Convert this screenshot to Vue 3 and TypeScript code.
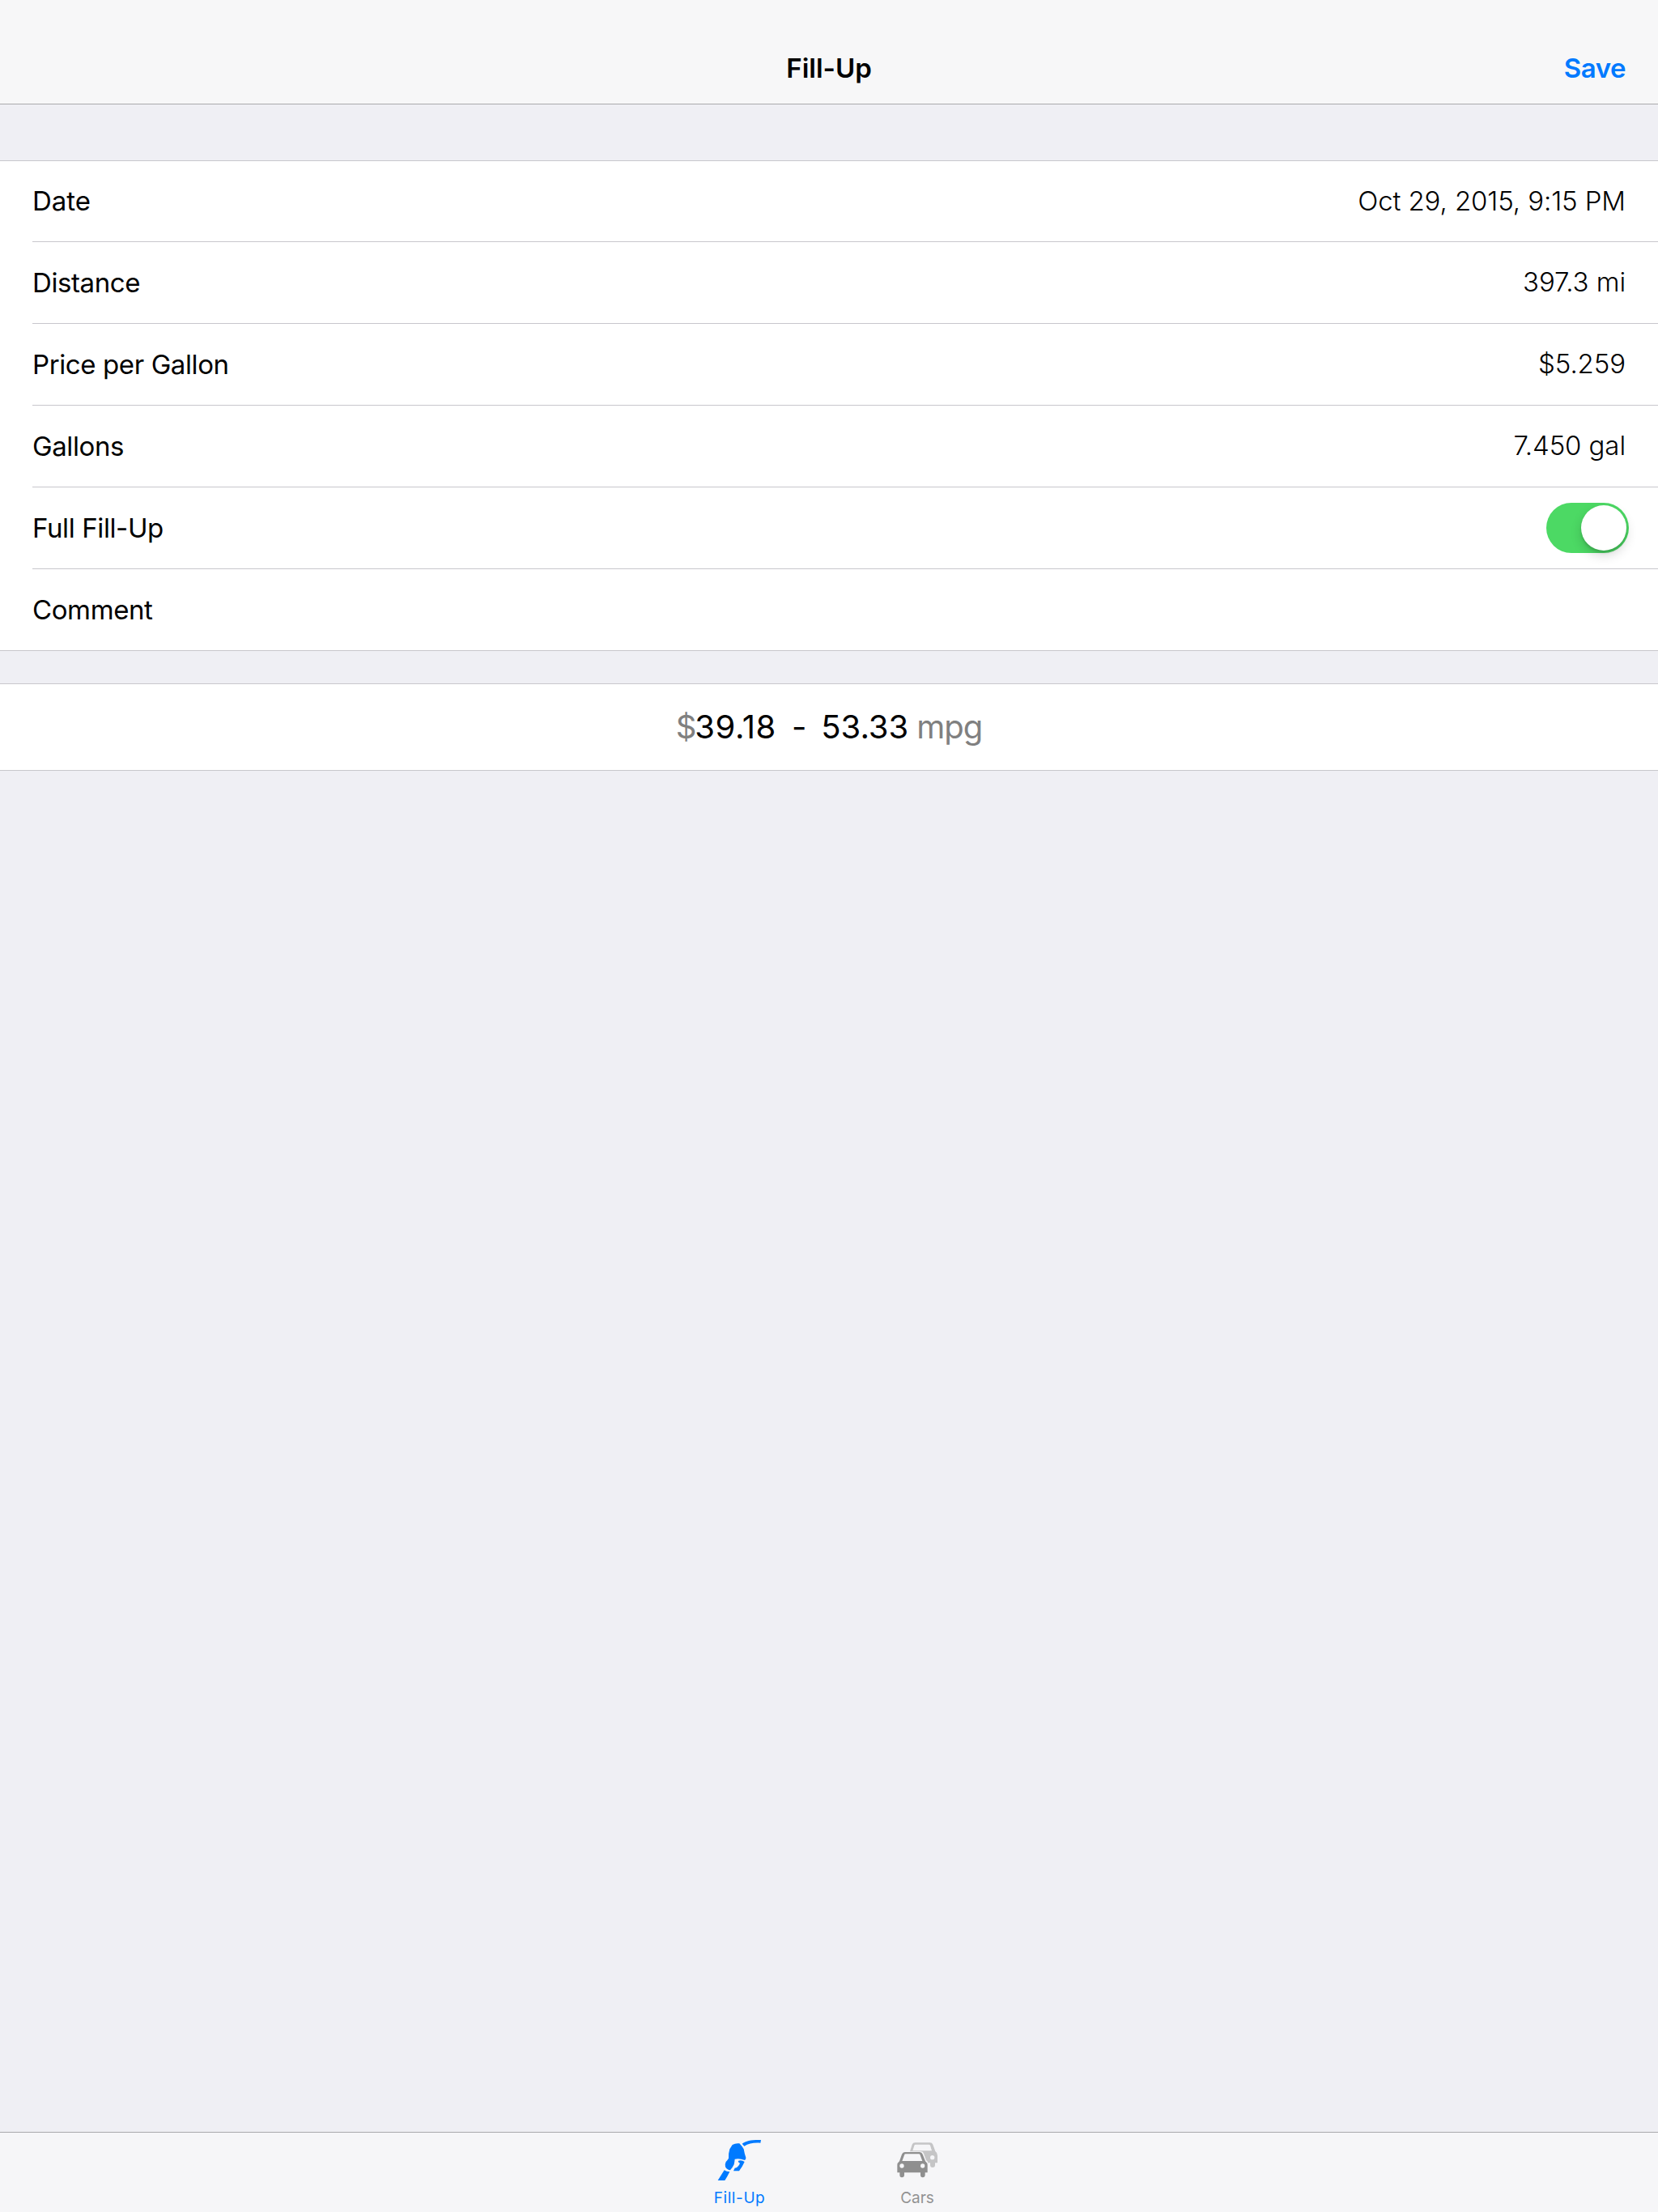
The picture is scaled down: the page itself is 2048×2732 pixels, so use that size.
<script setup lang="ts">
import { ref } from 'vue'

interface Field {
  label: string
  value?: string
  toggle?: boolean
}

const fields: Field[] = [
  { label: 'Date', value: 'Oct 29, 2015, 9:15 PM' },
  { label: 'Distance', value: '397.3 mi' },
  { label: 'Price per Gallon', value: '$5.259' },
  { label: 'Gallons', value: '7.450 gal' },
  { label: 'Full Fill-Up', toggle: true },
  { label: 'Comment' },
]

const fullFillUp = ref(true)
const activeTab = ref<'fillup' | 'cars'>('fillup')
</script>

<template>
  <div class="screen">
    <header class="nav">
      <span class="nav-side"></span>
      <h1 class="nav-title">Fill-Up</h1>
      <button class="nav-side save">Save</button>
    </header>

    <main class="content">
      <section class="group">
        <div v-for="f in fields" :key="f.label" class="row">
          <span class="label">{{ f.label }}</span>
          <span v-if="f.value" class="value">{{ f.value }}</span>
          <button
            v-if="f.toggle"
            class="switch"
            :class="{ on: fullFillUp }"
            role="switch"
            :aria-checked="fullFillUp"
            @click="fullFillUp = !fullFillUp"
          >
            <span class="knob"></span>
          </button>
        </div>
      </section>

      <section class="summary">
        <span class="muted">$</span><span class="cost">39.18</span><span class="dash">-</span><span class="mileage">53.33</span><span class="muted unit">mpg</span>
      </section>
    </main>

    <nav class="tabs">
      <button class="tab" :class="{ active: activeTab === 'fillup' }" @click="activeTab = 'fillup'">
        <svg class="icon" viewBox="72 60 180 180" fill="currentColor">
          <path d="M170 83 C186 72 206 68 240 69 L238 80 C214 78 194 82 178 92 Z" />
          <path d="M134 87 Q146 80 160 82 Q169 91 176 103 Q179 121 184 134 Q185 140 180 144 Q160 136 143 140 Q142 150 140 160 Q135 171 126 181 Q114 180 108 169 Q106 157 110 150 Q116 144 120 137 Q119 119 124 103 Z" />
          <path d="M155 147 Q168 142 179 150 Q171 168 159 184 L138 184 L143 173 Q150 173 153 169 Q160 162 162 155 Q156 153 155 147 Z" />
          <path d="M104 181 Q112 187 124 187 Q116 204 106 219 L80 219 Z" />
        </svg>
        <span class="tab-label wide">Fill-Up</span>
      </button>
      <button class="tab" :class="{ active: activeTab === 'cars' }" @click="activeTab = 'cars'">
        <svg class="icon" viewBox="72 60 180 180">
          <path
            fill="#c5c5c6"
            fill-rule="evenodd"
            d="M132 112 L140 86 Q143 79 151 79 L206 79 Q214 79 217 86 L226 111 Q234 117 234 126 L234 154 L225 154 L225 162 Q225 171 216 171 Q207 171 207 162 L207 154 L199 154 Q198 147 192 144 L183 119 Q180 112 174 112 Z M142 109 L213 109 L207 89 Q206 86 202 86 L153 86 Q149 86 148 90 Z"
          />
          <circle cx="215" cy="134" r="8" fill="#f6f6f8" />
          <path
            fill="#8f8f8f"
            fill-rule="evenodd"
            d="M93 148 L102 122 Q105 114 113 114 L168 114 Q176 114 179 122 L189 148 Q197 154 197 163 L197 190 L188 190 L188 199 Q188 208 179 208 Q171 208 171 199 L171 190 L111 190 L111 199 Q111 208 102 208 Q94 208 94 199 L94 190 L85 190 L85 163 Q85 154 93 148 Z M103 147 L178 147 L170 125 Q169 121 165 121 L116 121 Q112 121 111 125 Z"
          />
          <circle cx="102" cy="165" r="8" fill="#f6f6f8" />
          <circle cx="179" cy="165" r="8" fill="#f6f6f8" />
        </svg>
        <span class="tab-label">Cars</span>
      </button>
    </nav>
  </div>
</template>

<style>
body {
  margin: 0;
  background: #efeff4;
}
</style>

<style scoped>
.screen {
  display: flex;
  flex-direction: column;
  height: 2732px;
  background: #efeff4;
  color: #000;
  font-family: Inter, 'Liberation Sans', sans-serif;
  font-size: 33px;
}

button {
  padding: 0;
  border: 0;
  background: none;
  color: inherit;
  font: inherit;
}

.nav {
  box-sizing: border-box;
  display: flex;
  align-items: center;
  height: 129px;
  padding: 40px 40px 0;
  background: #f7f7f8;
  border-bottom: 1px solid #a9a9ac;
}

.nav-side {
  flex: 1;
}

.nav-title {
  margin: 0;
  font-size: 33px;
  font-weight: 600;
}

.save {
  color: #007aff;
  font-weight: 600;
  letter-spacing: -0.45px;
  text-align: right;
}

.content {
  flex: 1;
}

.group {
  margin-top: 69px;
  background: #fff;
  border-top: 1px solid #c8c7cc;
  border-bottom: 1px solid #c8c7cc;
}

.row {
  box-sizing: border-box;
  display: flex;
  align-items: center;
  justify-content: space-between;
  height: 101px;
  margin-left: 40px;
  padding-right: 40px;
  border-bottom: 1px solid #c8c7cc;
}

.row:first-child {
  height: 100px;
  padding-bottom: 1px;
}

.row:last-child {
  height: 100px;
  border-bottom: 0;
}

.label {
  letter-spacing: -0.39px;
}

.row:first-child .label {
  letter-spacing: 0;
}

.value {
  margin-bottom: 2px;
  font-weight: 300;
  letter-spacing: -0.1px;
}

.row:first-child .value {
  margin-bottom: 0;
}

.switch {
  box-sizing: border-box;
  display: flex;
  width: 102px;
  height: 62px;
  margin-right: -4px;
  padding: 3px;
  border-radius: 31px;
  background: #e5e5ea;
}

.switch.on {
  justify-content: flex-end;
  background: #4cd964;
}

.knob {
  width: 56px;
  height: 56px;
  border-radius: 50%;
  background: #fff;
  box-shadow: 0 6px 14px rgba(0, 0, 0, 0.16), 0 3px 3px rgba(0, 0, 0, 0.12);
}

.summary {
  box-sizing: border-box;
  display: flex;
  align-items: center;
  justify-content: center;
  height: 108px;
  margin-top: 40px;
  padding-bottom: 1px;
  background: #fff;
  border-top: 1px solid #c8c7cc;
  border-bottom: 1px solid #c8c7cc;
  font-size: 40px;
}

.muted {
  color: #808080;
}

.cost {
  margin-left: -2px;
  letter-spacing: 0.6px;
}

.dash {
  margin-left: 19px;
}

.mileage {
  margin-left: 18px;
}

.unit {
  margin-left: 10px;
  letter-spacing: -1px;
}

.tabs {
  box-sizing: border-box;
  display: flex;
  justify-content: center;
  gap: 68px;
  height: 99px;
  background: #f6f6f8;
  border-top: 1px solid #a9a9ac;
}

.tab {
  display: flex;
  flex-direction: column;
  align-items: center;
  width: 152px;
  padding-top: 6px;
  color: #929292;
}

.tab.active {
  color: #007aff;
}

.icon {
  width: 60px;
  height: 60px;
}

.tab-label {
  margin-top: 3px;
  margin-right: 2px;
  font-size: 19px;
  line-height: 24px;
}

.tab-label.wide {
  margin-right: 1px;
  letter-spacing: 0.6px;
}
</style>
